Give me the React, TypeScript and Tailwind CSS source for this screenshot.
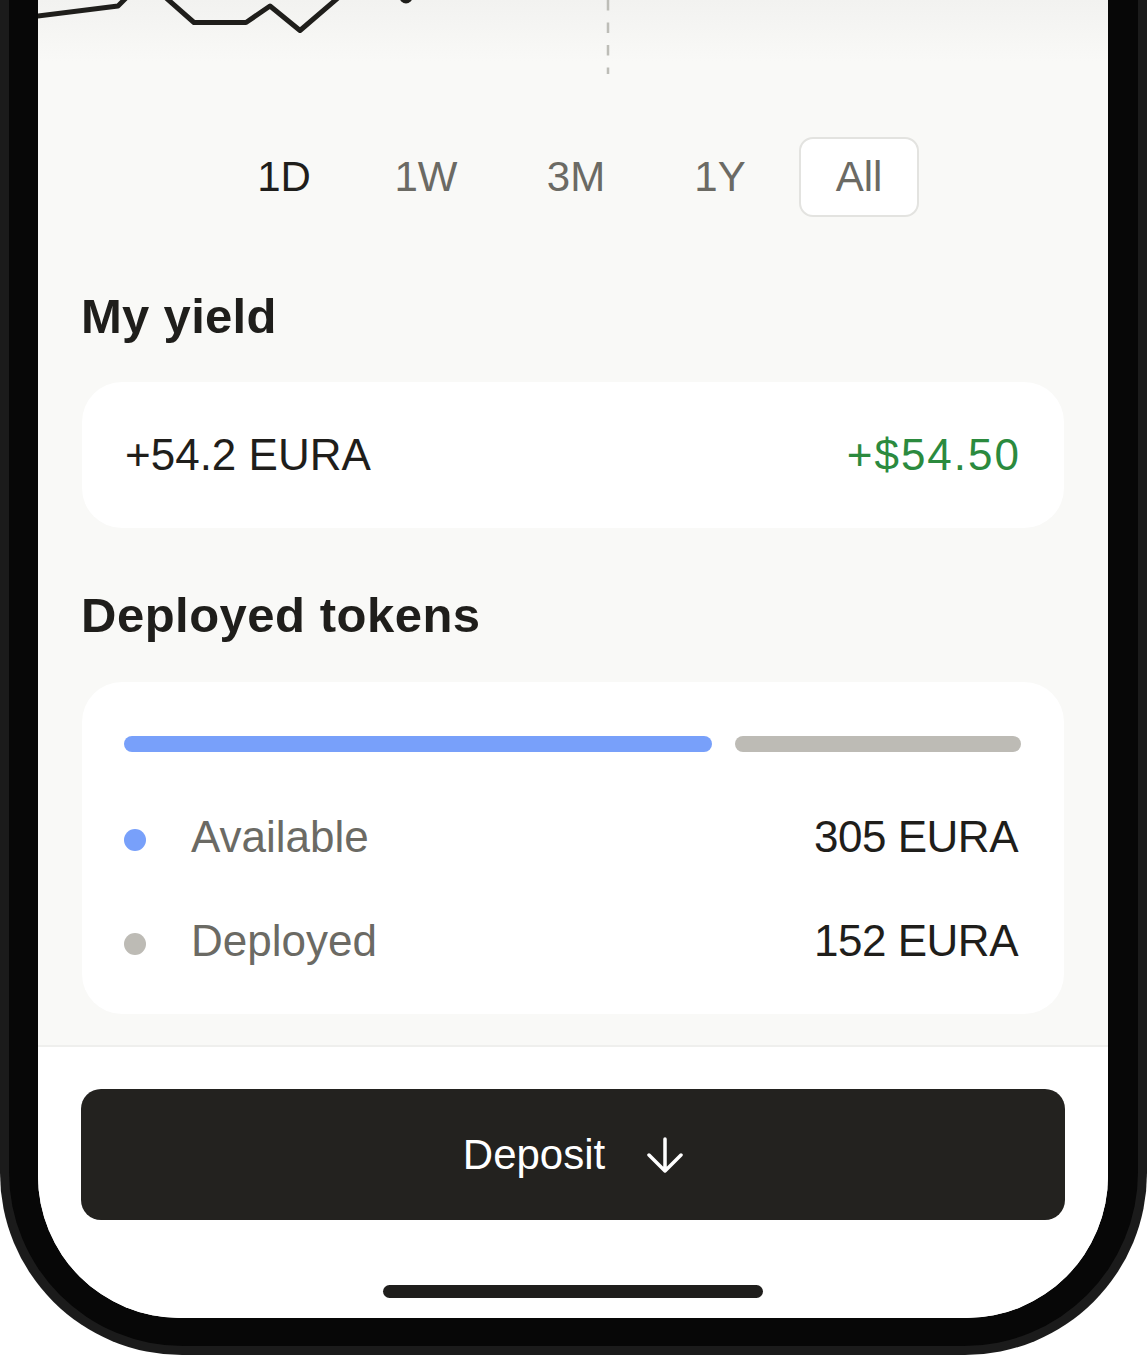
import React from "react";

const tabs = [
  { label: "1D", w: "w-[114px]", cls: "text-[#1f1e1b]" },
  { label: "1W", w: "w-[124px]", cls: "text-[#6b6a64]" },
  { label: "3M", w: "w-[130px]", cls: "text-[#6b6a64]" },
  { label: "1Y", w: "w-[112px]", cls: "text-[#6b6a64]" },
];

export default function App() {
  return (
    <div className="w-[1148px] h-[1356px] bg-white font-['Liberation_Sans',Arial,sans-serif]">
      {/* phone frame */}
      <div className="w-[1147px] h-[1355px] rounded-b-[182px] bg-[#1b1b1b] px-[9px] pb-[9px]">
        <div className="h-full rounded-b-[174px] bg-[#070707] pl-[29px] pr-[30px] pb-[28px]">
          <div className="h-full rounded-b-[142px] overflow-hidden flex flex-col bg-white">
            {/* content */}
            <div className="h-[1045px] bg-[#f9f9f7] px-[44px] pb-[31px] flex flex-col">
              {/* chart remnant */}
              <div className="h-[137px] -mx-[44px] bg-[linear-gradient(to_bottom,#f2f2f0_0px,#f9f9f7_62px)]">
                <svg width="1070" height="80" viewBox="38 0 1070 80" className="block">
                  <path
                    d="M30 17 L118 6 L140 -16 L148 -18 L194 22.5 L246 22.5 L270 6 L300 30.5 L346 -9"
                    fill="none"
                    stroke="#1f1e1b"
                    strokeWidth="5"
                    strokeLinejoin="round"
                    strokeLinecap="round"
                  />
                  <circle cx="406" cy="-3" r="6.5" fill="#1f1e1b" />
                  <line
                    x1="608"
                    y1="0"
                    x2="608"
                    y2="74"
                    stroke="#bdbdb7"
                    strokeWidth="2.5"
                    strokeDasharray="10.5 12"
                  />
                </svg>
              </div>

              {/* range tabs */}
              <div className="h-[80px] flex justify-center gap-[23px]">
                {tabs.map((t) => (
                  <div
                    key={t.label}
                    className={`${t.w} h-[80px] flex items-center justify-center text-[42px] leading-none ${t.cls}`}
                  >
                    {t.label}
                  </div>
                ))}
                <div className="w-[120px] h-[80px] flex items-center justify-center rounded-[14px] border-2 border-[#e3e3e0] bg-white text-[42px] leading-none text-[#6b6a64]">
                  All
                </div>
              </div>

              {/* My yield */}
              <h2 className="mt-[75px] h-[48px] -ml-[1px] text-[49px] leading-none tracking-[0.3px] font-bold text-[#1f1e1b]">
                My yield
              </h2>
              <div className="mt-[42px] h-[146px] rounded-[40px] bg-white px-[43px] flex items-center justify-between">
                <span className="text-[44px] leading-none text-[#1f1e1b]">+54.2 EURA</span>
                <span className="text-[44px] leading-none tracking-[2px] text-[#2b8a3e]">+$54.50</span>
              </div>

              {/* Deployed tokens */}
              <h2 className="mt-[63px] h-[48px] -ml-[1px] text-[49px] leading-none tracking-[0.5px] font-bold text-[#1f1e1b] whitespace-nowrap">
                Deployed tokens
              </h2>
              <div className="mt-[43px] h-[332px] rounded-[40px] bg-white pt-[54px] pb-[51px] pl-[42px] pr-[43px] flex flex-col">
                <div className="h-[16px] flex gap-[23px]">
                  <div className="flex-[587] rounded-full bg-[#78a0fa]" />
                  <div className="flex-[286] rounded-full bg-[#bdbbb5]" />
                </div>
                <div className="mt-[63px] h-[44px] flex items-center pr-[3px]">
                  <span className="mt-[6px] w-[22px] h-[22px] rounded-full bg-[#78a0fa]" />
                  <span className="ml-[45px] text-[44px] leading-none text-[#6b6a64]">Available</span>
                  <span className="ml-auto text-[44px] leading-none tracking-[-0.5px] text-[#1f1e1b]">305 EURA</span>
                </div>
                <div className="mt-[60px] h-[44px] flex items-center pr-[3px]">
                  <span className="mt-[6px] w-[22px] h-[22px] rounded-full bg-[#bdbbb5]" />
                  <span className="ml-[45px] text-[44px] leading-none text-[#6b6a64]">Deployed</span>
                  <span className="ml-auto text-[44px] leading-none tracking-[-0.5px] text-[#1f1e1b]">152 EURA</span>
                </div>
              </div>
            </div>

            {/* bottom bar */}
            <div className="flex-1 border-t-2 border-[#efefed] bg-white px-[43px] pt-[42px] flex flex-col items-center">
              <button className="w-full h-[131px] rounded-[20px] bg-[#23221f] flex items-center justify-center gap-[42px] text-white">
                <span className="text-[42px] leading-none">Deposit</span>
                <svg width="36" height="36" viewBox="0 0 36 36" fill="none">
                  <path
                    d="M18 2 V34 M2 18 L18 34 L34 18"
                    stroke="white"
                    strokeWidth="3.5"
                    strokeLinecap="round"
                    strokeLinejoin="round"
                  />
                </svg>
              </button>
              <div className="mt-[65px] w-[380px] h-[13px] rounded-full bg-[#1f1e1c]" />
            </div>
          </div>
        </div>
      </div>
    </div>
  );
}
